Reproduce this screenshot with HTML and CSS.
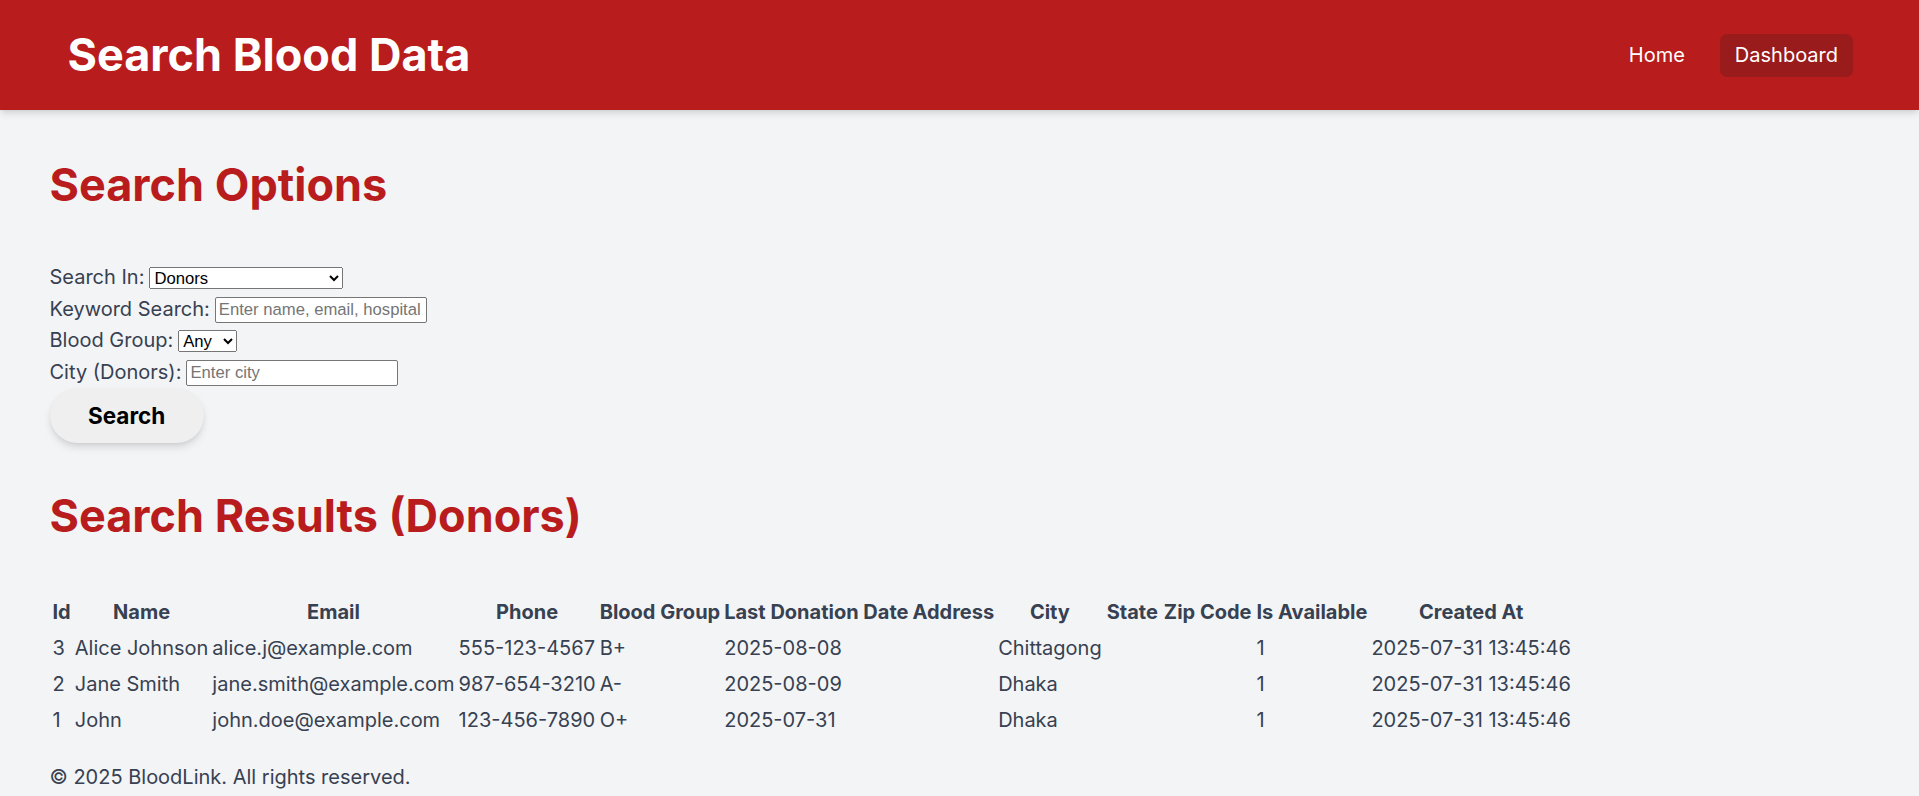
FILE: index.html
```html
<!DOCTYPE html>
<html lang="en">
<head>
<meta charset="utf-8">
<title>Search Blood Data</title>
<link rel="stylesheet" href="styles.css">
</head>
<body>
<header class="topbar">
  <h1 class="brand">Search Blood Data</h1>
  <nav class="nav">
    <a class="nav-link" href="#">Home</a>
    <a class="nav-link nav-link-active" href="#">Dashboard</a>
  </nav>
</header>

<main class="content">
  <h2 class="section-title">Search Options</h2>
  <form class="search-form">
    <div class="form-row">
      <label class="form-label" for="table">Search In:</label>
      <select id="table" class="control select-wide">
        <option>Donors</option>
        <option>Recipients</option>
        <option>Blood Requests</option>
      </select>
    </div>
    <div class="form-row">
      <label class="form-label" for="kw">Keyword Search:</label>
      <input id="kw" class="control text-input" type="text" placeholder="Enter name, email, hospital">
    </div>
    <div class="form-row">
      <label class="form-label" for="bg">Blood Group:</label>
      <select id="bg" class="control select-narrow">
        <option>Any</option>
        <option>A+</option>
        <option>A-</option>
        <option>B+</option>
        <option>B-</option>
        <option>O+</option>
        <option>O-</option>
        <option>AB+</option>
        <option>AB-</option>
      </select>
    </div>
    <div class="form-row">
      <label class="form-label" for="city">City (Donors):</label>
      <input id="city" class="control text-input" type="text" placeholder="Enter city">
    </div>
    <button class="search-btn" type="button">Search</button>
  </form>

  <h2 class="section-title results-title">Search Results (Donors)</h2>
  <table class="results">
    <thead>
      <tr>
        <th>Id</th><th>Name</th><th>Email</th><th>Phone</th><th>Blood Group</th><th>Last Donation Date</th><th>Address</th><th>City</th><th class="wide-head">State</th><th class="wide-head">Zip Code</th><th>Is Available</th><th>Created At</th>
      </tr>
    </thead>
    <tbody>
      <tr>
        <td>3</td><td>Alice Johnson</td><td>alice.j@example.com</td><td>555-123-4567</td><td>B+</td><td>2025-08-08</td><td></td><td>Chittagong</td><td></td><td></td><td>1</td><td>2025-07-31 13:45:46</td>
      </tr>
      <tr>
        <td>2</td><td>Jane Smith</td><td>jane.smith@example.com</td><td>987-654-3210</td><td>A-</td><td>2025-08-09</td><td></td><td>Dhaka</td><td></td><td></td><td>1</td><td>2025-07-31 13:45:46</td>
      </tr>
      <tr>
        <td>1</td><td>John</td><td>john.doe@example.com</td><td>123-456-7890</td><td>O+</td><td>2025-07-31</td><td></td><td>Dhaka</td><td></td><td></td><td>1</td><td>2025-07-31 13:45:46</td>
      </tr>
    </tbody>
  </table>

  <footer class="footer">© 2025 BloodLink. All rights reserved.</footer>
</main>
</body>
</html>
```

FILE: styles.css
```css
* {
  box-sizing: border-box;
}

html, body {
  margin: 0;
  padding: 0;
}

body {
  background: #f3f4f6;
  font-family: "Inter", "Noto Sans", sans-serif;
  font-size: 20px;
  line-height: 30px;
  color: #374151;
}

.topbar {
  display: flex;
  align-items: center;
  justify-content: space-between;
  height: 110px;
  padding: 0 66px 0 67.5px;
  background: #b91c1c;
  box-shadow: 0 5px 7px -1px rgba(0, 0, 0, 0.1), 0 2px 5px -2px rgba(0, 0, 0, 0.1);
}

.brand {
  margin: 0;
  font-size: 45px;
  line-height: 50px;
  font-weight: 700;
  color: #ffffff;
}

.nav {
  display: flex;
  align-items: center;
  gap: 20px;
}

.nav-link {
  display: block;
  padding: 7px 15px;
  line-height: 29px;
  font-size: 20px;
  color: #ffffff;
  text-decoration: none;
  border-radius: 7px;
}

.nav-link-active {
  background: #991b1b;
}

.content {
  padding: 50px 47px 0 49.5px;
}

.section-title {
  margin: 0 0 51px 0;
  font-size: 45px;
  line-height: 50px;
  font-weight: 700;
  color: #b91c1c;
}

.search-form {
  display: flex;
  flex-direction: column;
  align-items: flex-start;
}

.form-row {
  display: flex;
  align-items: center;
  gap: 5px;
  height: 31.7px;
}

.form-label {
  line-height: 30px;
}

.control {
  font-family: "Liberation Sans", Arial, sans-serif;
  font-size: 16.67px;
  color: #000000;
  margin-top: 2px;
}

.select-wide {
  width: 194px;
  height: 22px;
}

.select-narrow {
  width: 59px;
  height: 22px;
}

.text-input {
  width: 212px;
  height: 26px;
  padding: 1px 3px;
  border: 1px solid #767676;
  border-radius: 2px;
  background: #ffffff;
}

.text-input::placeholder {
  color: #757575;
}

.search-btn {
  margin-top: 0;
  padding: 10px 38.5px;
  font-family: "Inter", "Noto Sans", sans-serif;
  font-size: 22.5px;
  line-height: 35px;
  font-weight: 700;
  color: #000000;
  background: #efefef;
  border: none;
  border-radius: 9999px;
  box-shadow: 0 5px 8px -1px rgba(0, 0, 0, 0.12), 0 2px 5px -2px rgba(0, 0, 0, 0.1);
}

.results-title {
  margin-top: 48px;
  margin-bottom: 52px;
}

.results {
  border-spacing: 2.5px;
  font-size: 20px;
  line-height: 30px;
  color: #374151;
}

.results th {
  padding: 2px 1px;
  font-weight: 700;
  text-align: center;
  white-space: nowrap;
}

.results th.wide-head {
  padding: 2px 2px;
}

.results td {
  padding: 2px 1px;
  text-align: left;
  white-space: nowrap;
}

.footer {
  margin-top: 23px;
  line-height: 30px;
  font-size: 20px;
  color: #374151;
}
```
